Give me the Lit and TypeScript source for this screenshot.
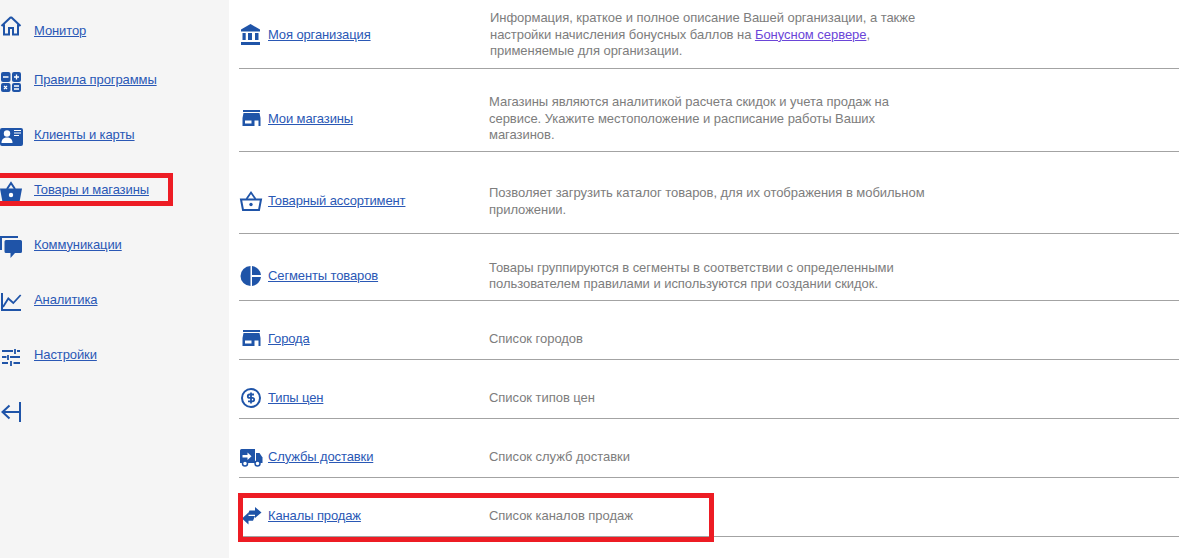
import { LitElement, html, css, svg } from "lit";
import { customElement } from "lit/decorators.js";

const C = "#1f54a8";

const shop = svg`<path d="M4 6h17v2H4z"/><path fill-rule="evenodd" d="M4.500 9h16L21.500 14v8h-2v-5.500h-4V22H3.500v-8zM6 16.500v3h6.500v-3z"/>`;

const sideIcons: Record<string, unknown> = {
  home: svg`<path d="M11 2 L20.500 11 M11 2 L1.500 11 M4 9.500V19.500H9V13H13V19.500H18V9.500" fill="none" stroke="${C}" stroke-width="2"/>`,
  calc: svg`<rect x="1" y="8" width="9.500" height="10" rx="2"/><rect x="12" y="8" width="9" height="10" rx="2"/><rect x="1" y="19" width="9.500" height="9" rx="2"/><rect x="12" y="19" width="9" height="9" rx="2"/><path d="M3 13h5.500M14 13h5M16.500 10.500v5M14 22h5M14 25h5M4 22l3 3M7 22l-3 3" fill="none" stroke="#fff" stroke-width="1.300"/>`,
  card: svg`<path d="M2 9h19a2 2 0 0 1 2 2v14a2 2 0 0 1-2 2H2a2 2 0 0 1-2-2V11a2 2 0 0 1 2-2z"/><circle cx="7" cy="14.500" r="3.200" fill="#fff"/><path d="M1.500 24c0-4 2.500-5.500 5.500-5.500s5.500 1.500 5.500 5.500z" fill="#fff"/><path d="M14 11.500h7M14 14h7M14 16.500h5" stroke="#fff" stroke-width="1.100"/>`,
  basket: svg`<path d="M7 15L11 9L15 15" fill="none" stroke="${C}" stroke-width="2"/><path d="M0 14.500H22L19.500 28H2.500z"/><circle cx="11" cy="21" r="2.200" fill="#fff"/>`,
  comments: svg`<path d="M18 8H1V21" fill="none" stroke="${C}" stroke-width="2"/><path d="M6 11h14.500a1.500 1.500 0 0 1 1.500 1.500v10a1.500 1.500 0 0 1-1.500 1.500H15l-4.500 5V24H6a1.500 1.500 0 0 1-1.500-1.500v-10A1.500 1.500 0 0 1 6 11z"/>`,
  chart: svg`<path d="M2 9V26H21" fill="none" stroke="${C}" stroke-width="2"/><path d="M3 23L8.300 14.500L13.300 19L20.700 11" fill="none" stroke="${C}" stroke-width="1.800"/>`,
  sliders: svg`<path d="M2 12h11M17 12h3M2 18h4.500M10 18h10M2 24h6M13.500 24h6.500" fill="none" stroke="${C}" stroke-width="2"/><path d="M15 10v5M8 16v5M11 22v5" fill="none" stroke="${C}" stroke-width="1.800"/>`,
  collapse: svg`<path d="M20 6V26M19 16H3M9.500 9.500L2.500 16L9.500 22.500" fill="none" stroke="${C}" stroke-width="2"/>`,
};

const mainIcons: Record<string, unknown> = {
  bank: svg`<path d="M11.500 4L2 9.500V11.500H21V9.500z"/><path d="M3.500 13h3.200v7H3.500zM9 13h4v7H9zM16 13h3.500v7H16zM2 22h19v3H2z"/>`,
  shop,
  basket: svg`<path d="M7.500 12L12 5.500L16.500 12" fill="none" stroke="${C}" stroke-width="1.800"/><path d="M2 12.500H22L20 23H4z" fill="none" stroke="${C}" stroke-width="2"/><circle cx="12" cy="17.500" r="1.700"/>`,
  pie: svg`<path d="M11.500 5a10 10 0 0 0 0 20z"/><path d="M13 5a10 10 0 0 1 9 9H13z"/><path d="M13 16h9a10 10 0 0 1-9 9z"/>`,
  dollar: svg`<circle cx="12" cy="15" r="9" fill="none" stroke="${C}" stroke-width="2"/><path d="M15 11.500H10.500a1.700 1.700 0 0 0 0 3.400h3a1.700 1.700 0 0 1 0 3.400H9M12 9.500v11" fill="none" stroke="${C}" stroke-width="1.800"/>`,
  truck: svg`<path fill-rule="evenodd" d="M2.500 7H16v14H1V8.500A1.500 1.500 0 0 1 2.500 7zM3.500 13v2.500h5V18l4-3.700-4-3.700V13z"/><path d="M17 11h3.500l3 4.500V21H17z"/><circle cx="6" cy="21.500" r="2.500" fill="#fff" stroke="${C}" stroke-width="1.500"/><circle cx="18.500" cy="21.500" r="2.500" fill="#fff" stroke="${C}" stroke-width="1.500"/>`,
  swap: svg`<path d="M10.500 9.500h5.500V6l6.500 5.500-6.500 5.500v-3.300H8.500z"/><path d="M16 15H9.500v-3.500L3 17.500l6.500 6v-3.800H14z"/>`,
};

interface Side { label: string; icon: string; }
const sideItems: Side[] = [
  { label: "Монитор", icon: "home" },
  { label: "Правила программы", icon: "calc" },
  { label: "Клиенты и карты", icon: "card" },
  { label: "Товары и магазины", icon: "basket" },
  { label: "Коммуникации", icon: "comments" },
  { label: "Аналитика", icon: "chart" },
  { label: "Настройки", icon: "sliders" },
];

interface Row { label: string; icon: string; height: number; desc: unknown; }
const rows: Row[] = [
  {
    label: "Моя организация",
    icon: "bank",
    height: 85,
    desc: html`Информация, краткое и полное описание Вашей организации, а также настройки начисления бонусных баллов на <a class="visited" href="#">Бонусном сервере</a>, применяемые для организации.`,
  },
  {
    label: "Мои магазины",
    icon: "shop",
    height: 83,
    desc: "Магазины являются аналитикой расчета скидок и учета продаж на сервисе. Укажите местоположение и расписание работы Ваших магазинов.",
  },
  {
    label: "Товарный ассортимент",
    icon: "basket",
    height: 82,
    desc: "Позволяет загрузить каталог товаров, для их отображения в мобильном приложении.",
  },
  {
    label: "Сегменты товаров",
    icon: "pie",
    height: 67,
    desc: "Товары группируются в сегменты в соответствии с определенными пользователем правилами и используются при создании скидок.",
  },
  { label: "Города", icon: "shop", height: 59, desc: "Список городов" },
  { label: "Типы цен", icon: "dollar", height: 59, desc: "Список типов цен" },
  { label: "Службы доставки", icon: "truck", height: 59, desc: "Список служб доставки" },
  { label: "Каналы продаж", icon: "swap", height: 59, desc: "Список каналов продаж" },
];

@customElement("app-root")
export class AppRoot extends LitElement {
  static styles = css`
    :host {
      display: flex;
      position: relative;
      width: 1179px;
      height: 558px;
      overflow: hidden;
      background: #fff;
      font-family: "Liberation Sans", Arial, sans-serif;
      font-size: 13px;
      line-height: 16.5px;
    }
    a { color: #2a58b5; text-decoration: underline; }
    a.visited { color: #6a45d8; }
    svg { display: block; fill: #1f54a8; flex: none; overflow: visible; }
    .side {
      flex: none;
      box-sizing: border-box;
      width: 229px;
      padding-top: 15px;
      background: #f5f5f5;
      display: flex;
      flex-direction: column;
      gap: 23px;
    }
    .side-item {
      display: flex;
      align-items: center;
      gap: 10px;
      height: 32px;
      letter-spacing: -0.1px;
    }
    .side-item:first-child { margin-bottom: -6px; }
    .collapse { margin-top: 2px; }
    .main {
      flex: 1;
      min-width: 0;
      padding-left: 10px;
      margin-top: -16px;
    }
    .row {
      box-sizing: border-box;
      display: flex;
      align-items: center;
      padding-top: 18px;
      border-bottom: 1px solid #a3a3a3;
    }
    .name {
      flex: none;
      width: 250px;
      display: flex;
      align-items: center;
      gap: 5px;
      letter-spacing: -0.12px;
    }
    .desc {
      width: 440px;
      color: #7d7d7d;
      letter-spacing: -0.04px;
    }
    .row:first-child .desc { padding-left: 1px; }
    .mark {
      position: absolute;
      box-sizing: border-box;
      border: 5px solid #ed1c24;
      pointer-events: none;
    }
    .mark-side { left: -5px; top: 173px; width: 178px; height: 33px; }
    .mark-row { left: 238px; top: 493px; width: 476px; height: 49px; }
  `;

  private sideIcon(name: string) {
    return svg`<svg width="24" height="32" viewBox="0 0 24 32" aria-hidden="true">${sideIcons[name]}</svg>`;
  }

  render() {
    return html`
      <nav class="side">
        ${sideItems.map(
          (s) => html`<div class="side-item">${this.sideIcon(s.icon)}<a href="#">${s.label}</a></div>`
        )}
        <div class="side-item collapse">${this.sideIcon("collapse")}</div>
      </nav>
      <main class="main">
        ${rows.map(
          (r) => html`<div class="row" style="height:${r.height}px">
            <div class="name">
              <svg width="24" height="30" viewBox="0 0 24 30" aria-hidden="true">${mainIcons[r.icon]}</svg>
              <a href="#">${r.label}</a>
            </div>
            <div class="desc">${r.desc}</div>
          </div>`
        )}
      </main>
      <div class="mark mark-side"></div>
      <div class="mark mark-row"></div>
    `;
  }
}
